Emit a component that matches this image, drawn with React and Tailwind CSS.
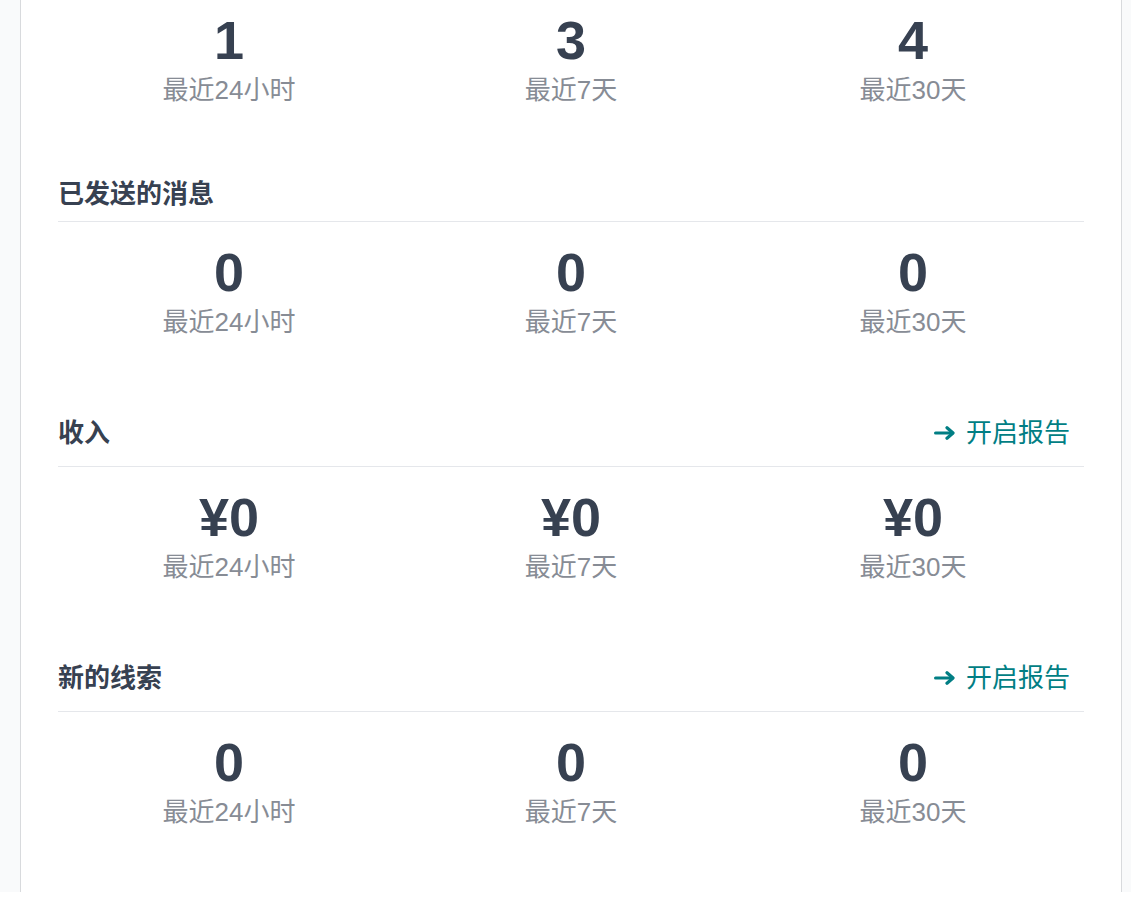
import React from 'react'

const sections = [
  { title: null, values: ['1', '3', '4'] },
  { title: '已发送的消息', values: ['0', '0', '0'] },
  { title: '收入', link: true, values: ['¥0', '¥0', '¥0'] },
  { title: '新的线索', link: true, values: ['0', '0', '0'] },
]

const periods = ['最近24小时', '最近7天', '最近30天']

function ArrowRight() {
  return (
    <svg width="22" height="14" viewBox="0 0 22 14" fill="none" className="inline-block">
      <path d="M1.5 7H18.5" stroke="currentColor" strokeWidth="3" strokeLinecap="round" />
      <path d="M13 1.8L19 7L13 12.2" stroke="currentColor" strokeWidth="3.2" strokeLinecap="round" strokeLinejoin="round" />
    </svg>
  )
}

function StatRow({ values }) {
  return (
    <div className="grid grid-cols-3 pt-[23px]">
      {values.map((v, i) => (
        <div key={i} className="flex flex-col items-center">
          <div className="text-[54px] leading-none font-bold text-[#374151]">{v}</div>
          <div className="mt-[5px] text-[26px] leading-[36px] text-[#878c95]">{periods[i]}</div>
        </div>
      ))}
    </div>
  )
}

export default function App() {
  return (
    <div
      className="flex bg-[#f9fafb] pl-[20px] pr-[9px] h-[892px]"
      style={{ fontFamily: '"Liberation Sans", "Noto Sans CJK SC", sans-serif' }}
    >
      <div className="flex-1 bg-white border-x border-[#d8dadd] px-[37px] pb-[63px]">
        {sections.map((s, idx) => (
          <div key={idx}>
            {s.title && (
              <div className="mt-[68px] flex items-center justify-between border-b border-[#e5e7eb] pb-[9px]">
                <h2 className="text-[26px] leading-[36px] font-bold text-[#374151]">{s.title}</h2>
                {s.link && (
                  <a className="flex items-center gap-[10px] pr-[14px] pt-[7px] pb-[6px] text-[26px] leading-[36px] text-[#017e84]">
                    <ArrowRight />
                    <span>开启报告</span>
                  </a>
                )}
              </div>
            )}
            <div className={idx === 0 ? '-mt-[10px]' : ''}>
              <StatRow values={s.values} />
            </div>
          </div>
        ))}
      </div>
    </div>
  )
}
